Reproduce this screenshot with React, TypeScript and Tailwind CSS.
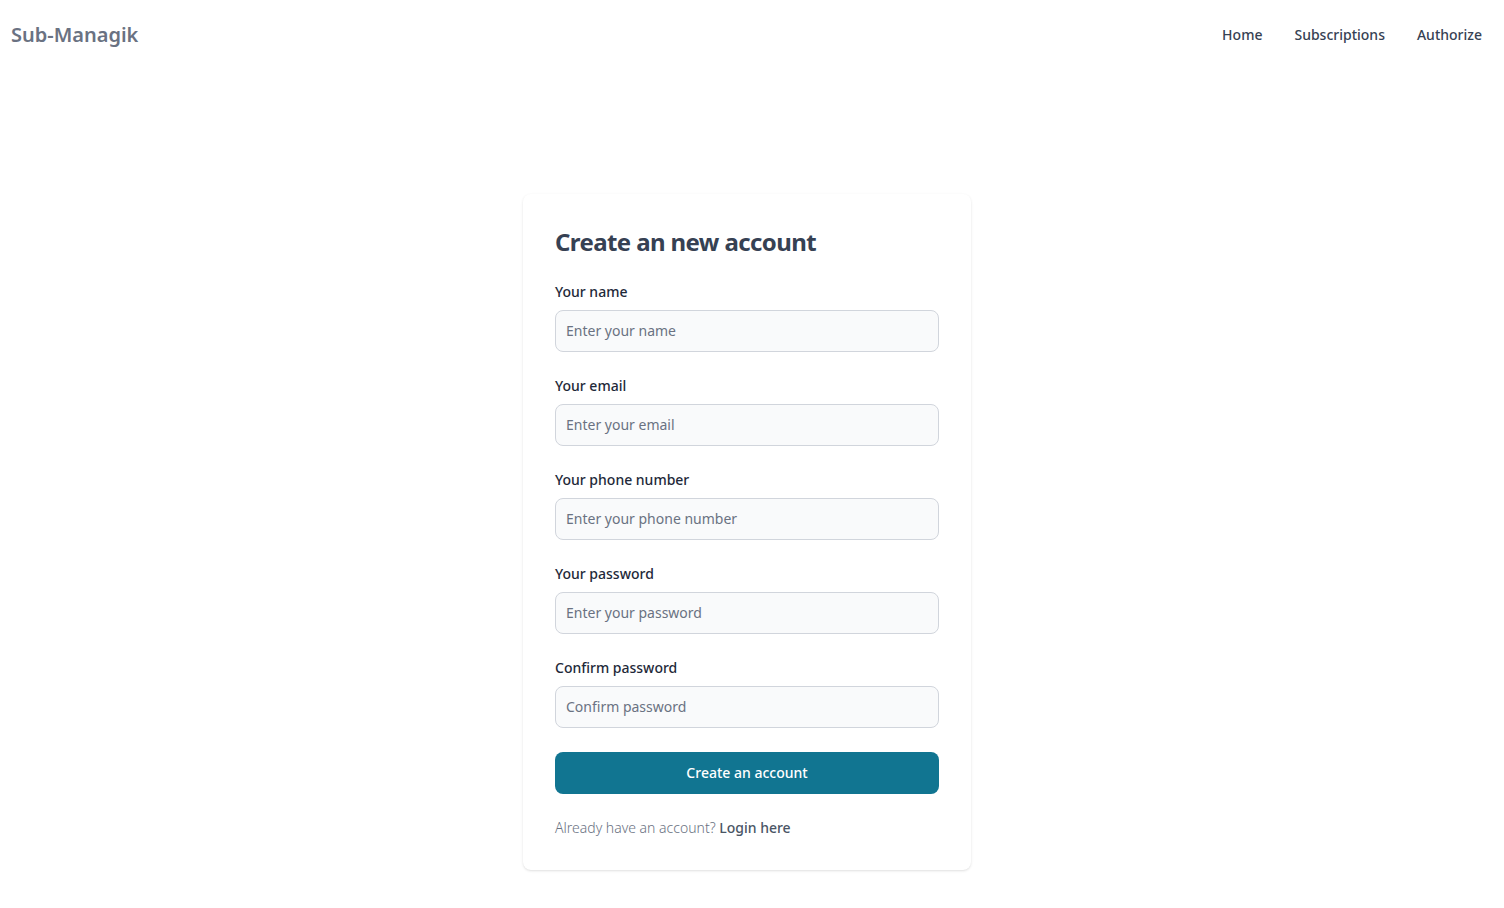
import React from 'react';

const fields = [
  { id: 'name', label: 'Your name', placeholder: 'Enter your name', type: 'text' },
  { id: 'email', label: 'Your email', placeholder: 'Enter your email', type: 'email' },
  { id: 'phone', label: 'Your phone number', placeholder: 'Enter your phone number', type: 'tel' },
  { id: 'password', label: 'Your password', placeholder: 'Enter your password', type: 'password' },
  { id: 'confirm', label: 'Confirm password', placeholder: 'Confirm password', type: 'password' },
];

export default function App() {
  return (
    <div className="min-h-screen bg-white font-['Noto_Sans',sans-serif]">
      <nav className="h-[70px] flex items-center justify-between pl-[11px] pr-[22px]">
        <a href="#" className="text-xl font-semibold text-gray-500">Sub-Managik</a>
        <ul className="flex items-center gap-8 text-sm font-medium text-gray-700">
          <li><a href="#">Home</a></li>
          <li><a href="#">Subscriptions</a></li>
          <li><a href="#">Authorize</a></li>
        </ul>
      </nav>

      <section className="flex justify-center pt-[124px] pr-[10px]">
        <div className="w-[448px] bg-white rounded-lg shadow">
          <div className="p-8 space-y-6">
            <h1 className="text-2xl font-bold tracking-tight text-gray-700 leading-8">Create an new account</h1>
            <form className="space-y-6" onSubmit={(e) => e.preventDefault()}>
              {fields.map((f) => (
                <div key={f.id}>
                  <label htmlFor={f.id} className="block mb-2 text-sm font-medium text-gray-800">
                    {f.label}
                  </label>
                  <input
                    id={f.id}
                    type={f.type}
                    placeholder={f.placeholder}
                    className="block w-full h-[42px] px-2.5 pb-px text-sm bg-gray-50 border border-gray-300 rounded-lg text-gray-900 placeholder:text-gray-500 outline-none"
                  />
                </div>
              ))}
              <button
                type="submit"
                className="w-full h-[42px] rounded-lg bg-[#117591] text-white text-sm font-medium"
              >
                Create an account
              </button>
              <p className="text-sm font-light text-gray-500">
                Already have an account? <a href="#" className="font-medium text-gray-600">Login here</a>
              </p>
            </form>
          </div>
        </div>
      </section>
    </div>
  );
}
